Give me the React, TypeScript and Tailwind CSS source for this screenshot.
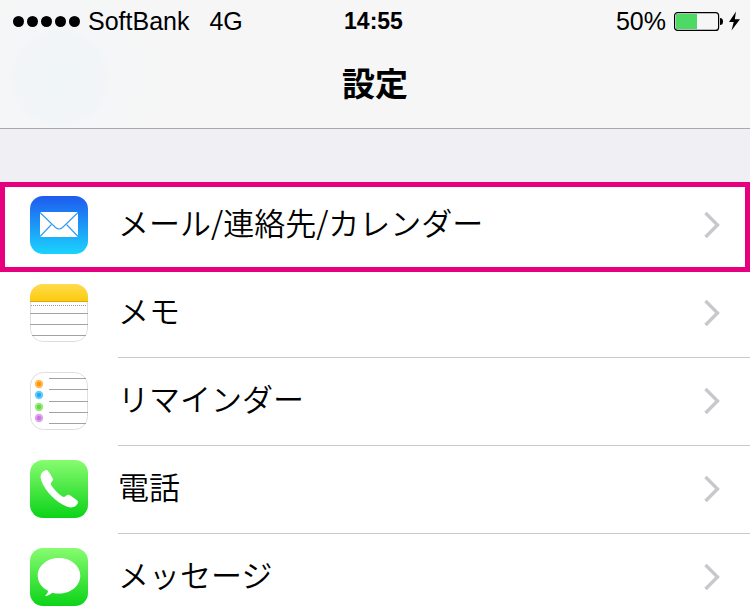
import type { ReactNode } from "react";

const fontStack =
  "font-['Liberation_Sans','Noto_Sans_CJK_JP',sans-serif]";

const jpFont = "font-['Noto_Sans_CJK_JP',sans-serif]";

const MailIcon = () => (
  <svg viewBox="0 0 58 58" className="size-[58px] shrink-0" aria-hidden="true">
    <defs>
      <linearGradient id="mail" x1="0" y1="0" x2="0" y2="1">
        <stop offset="0" stopColor="#1e5bef" />
        <stop offset="1" stopColor="#1bd3fe" />
      </linearGradient>
    </defs>
    <rect width="58" height="58" rx="13" fill="url(#mail)" />
    <rect x="10" y="16" width="38" height="25" fill="#fff" />
    <g fill="none" stroke="#2b9cf5" strokeWidth="1.1">
      <path d="M10 16.5 L25.5 31.5 Q29 34.5 32.5 31.5 L48 16.5" />
      <path d="M10 40.5 L21.5 28.5 M48 40.5 L36.5 28.5" />
    </g>
  </svg>
);

const NotesIcon = () => (
  <svg viewBox="0 0 58 58" className="size-[58px] shrink-0" aria-hidden="true">
    <defs>
      <linearGradient id="notes" x1="0" y1="0" x2="0" y2="1">
        <stop offset="0" stopColor="#ffdb4f" />
        <stop offset="1" stopColor="#fdca08" />
      </linearGradient>
      <clipPath id="notesClip">
        <rect width="58" height="58" rx="13" />
      </clipPath>
    </defs>
    <g clipPath="url(#notesClip)">
      <rect width="58" height="58" fill="#fff" />
      <rect x="0.5" y="0.5" width="57" height="57" rx="12.5" fill="none" stroke="#dedede" />
      <rect width="58" height="18" fill="url(#notes)" />
      <rect y="17" width="58" height="1" fill="#d5aa12" />
      <path d="M1 21.5 H57" stroke="#999" strokeDasharray="1 1" />
      <path d="M0 29.5 H58 M0 40.5 H58 M2 51.5 H56" stroke="#a2a2a2" />
    </g>
  </svg>
);

const reminderDots = [
  { y: 12, color: "#ff9500" },
  { y: 23, color: "#1badf8" },
  { y: 35, color: "#63da38" },
  { y: 46, color: "#cc73e1" },
];

const RemindersIcon = () => (
  <svg viewBox="0 0 58 58" className="size-[58px] shrink-0" aria-hidden="true">
    <rect x="0.5" y="0.5" width="57" height="57" rx="13" fill="#fff" stroke="#dedede" />
    <path d="M19 6.5 H56 M19 17.5 H58 M19 29.5 H58 M19 40.5 H58 M19 51.5 H56" stroke="#a2a2a2" />
    {reminderDots.map((dot) => (
      <g key={dot.y} fill={dot.color}>
        <circle cx="9" cy={dot.y} r="4.2" fillOpacity="0.65" />
        <circle cx="9" cy={dot.y} r="2.2" />
      </g>
    ))}
  </svg>
);

const PhoneIcon = () => (
  <svg viewBox="0 0 58 58" className="size-[58px] shrink-0" aria-hidden="true">
    <defs>
      <linearGradient id="phone" x1="0" y1="0" x2="0" y2="1">
        <stop offset="0" stopColor="#87fc70" />
        <stop offset="1" stopColor="#0bd318" />
      </linearGradient>
    </defs>
    <rect width="58" height="58" rx="13" fill="url(#phone)" />
    <path
      d="M12 12.5 C13.5 10.8 15.5 9.6 17 10 C18.3 10.8 21 15.3 22.7 18.2 C23.6 20 22.3 21.3 21.3 22.4 C20.5 23.5 21 24.6 21.7 25.7 C24.5 30 27.8 33.3 32 36.2 C33.4 37.2 34.5 37.3 35.4 36.3 C36.5 35 38 34.2 39.6 35 C42.4 36.7 45 38.6 47.2 40.4 C48.8 42 47.7 43.9 46 45.5 C43.5 47.8 40.4 47.9 37.3 46.8 C25.5 42 15.5 31.8 11.3 20.5 C10.3 17.7 10.3 14.7 12 12.5 Z"
      fill="#fff"
    />
  </svg>
);

const MessagesIcon = () => (
  <svg viewBox="0 0 58 58" className="size-[58px] shrink-0" aria-hidden="true">
    <defs>
      <linearGradient id="messages" x1="0" y1="0" x2="0" y2="1">
        <stop offset="0" stopColor="#87fc70" />
        <stop offset="1" stopColor="#0bd318" />
      </linearGradient>
    </defs>
    <rect width="58" height="58" rx="13" fill="url(#messages)" />
    <path
      d="M29 10 C40.8 10 50.3 17.8 50.3 27.7 C50.3 37.6 40.8 45.6 29 45.6 C26.6 45.6 24.3 45.3 22.2 44.7 C20.2 46.7 17.8 47.8 15 47.8 C17 46.3 18 44.6 18 42.8 C11.7 39.7 7.7 34 7.7 27.7 C7.7 17.8 17.2 10 29 10 Z"
      fill="#fff"
    />
  </svg>
);

const Chevron = () => (
  <svg viewBox="0 0 16 28" className="w-4 h-7 shrink-0" aria-hidden="true">
    <path d="M1.5 2 L13.5 14 L1.5 26" fill="none" stroke="#c7c7cc" strokeWidth="3.4" />
  </svg>
);

type RowProps = {
  label: string;
  icon: ReactNode;
  highlighted?: boolean;
  divider?: boolean;
};

const Row = ({ label, icon, highlighted, divider }: RowProps) => (
  <li className="relative">
    <a href="#" className="flex h-[88px] items-stretch pl-[30px] bg-white">
      <span className="flex items-center pb-0.5">{icon}</span>
      <span
        className={`ml-[30px] flex grow items-center justify-between pr-[30px] pb-px border-b ${
          divider ? "border-[#c8c7cc]" : "border-transparent"
        }`}
      >
        <span className={`${jpFont} text-[31px] leading-10 pb-1.5 font-[350] whitespace-nowrap`}>
          {label}
        </span>
        <Chevron />
      </span>
    </a>
    {highlighted && (
      <div className="pointer-events-none absolute inset-x-0 top-0 -bottom-0.5 z-10 border-[5px] border-[#e6007e]" />
    )}
  </li>
);

const rows: RowProps[] = [
  { label: "メール/連絡先/カレンダー", icon: <MailIcon />, highlighted: true },
  { label: "メモ", icon: <NotesIcon />, divider: true },
  { label: "リマインダー", icon: <RemindersIcon />, divider: true },
  { label: "電話", icon: <PhoneIcon />, divider: true },
  { label: "メッセージ", icon: <MessagesIcon /> },
];

const StatusBar = () => (
  <div className="grid grid-cols-[1fr_auto_1fr] items-center h-10 pl-[13px] pr-2 pt-px text-[25px] leading-10">
    <div className="flex items-center">
      {/* signal */}
      <div className="flex gap-[3px]">
        {[0, 1, 2, 3, 4].map((i) => (
          <span key={i} className="size-[11px] rounded-full bg-black" />
        ))}
      </div>
      <span className="ml-2">SoftBank</span>
      <span className="ml-5">4G</span>
    </div>
    <time className="mr-2 text-[23px] leading-10 font-bold">14:55</time>
    <div className="flex items-center justify-end">
      <span>50%</span>
      <svg viewBox="0 0 68 20" className="ml-2 w-[68px] h-5" aria-hidden="true">
        <rect x="0.6" y="1.6" width="44" height="17.8" rx="3" fill="none" stroke="#000" strokeWidth="1.2" />
        <rect x="2" y="3" width="21" height="15" fill="#4cd964" />
        <path d="M46 7 Q49 7 49 10.5 Q49 14 46 14 Z" />
        <path d="M62 0.5 L55 11 L59.7 11 L57.5 19.5 L66 8.2 L60.8 8.2 Z" />
      </svg>
    </div>
  </div>
);

export default function App() {
  return (
    <div className={`${fontStack} min-h-screen overflow-hidden bg-[#efeff4] text-black`}>
      <header className="border-b border-[#a9a9ad] bg-[#f6f6f6] bg-[radial-gradient(circle_at_60px_78px,#f0f5f8_0,#f1f5f8_38px,#f4f6f7_52px,#f6f6f6_110px)]">
        <StatusBar />
        <h1 className={`${jpFont} flex h-[88px] items-center justify-center pb-1 text-[33px] font-bold leading-10`}>
          設定
        </h1>
      </header>
      <main className="pt-[53px]">
        <ul>
          {rows.map((row) => (
            <Row key={row.label} {...row} />
          ))}
        </ul>
      </main>
    </div>
  );
}
